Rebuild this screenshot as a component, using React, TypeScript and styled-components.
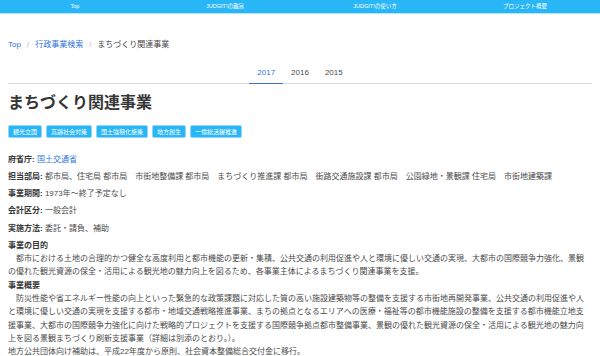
import React, { ReactElement } from 'react';
import styled, { createGlobalStyle } from 'styled-components';

const GlobalStyle = createGlobalStyle`
  body {
    margin: 0;
    background: #ffffff;
    font-family: "Liberation Sans", "Noto Sans CJK JP", sans-serif;
    color: #4a4a4a;
  }
`;

const navItems = ['Top', 'JUDGIT!の趣旨', 'JUDGIT!の使い方', 'プロジェクト概要'];
const tags = ['観光立国', '高齢社会対策', '国土強靭化施策', '地方創生', '一億総活躍推進'];
const years = ['2017', '2016', '2015'];

const bureaus = [
    '都市局、住宅局',
    '都市局　市街地整備課',
    '都市局　まちづくり推進課',
    '都市局　街路交通施設課',
    '都市局　公園緑地・景観課',
    '住宅局　市街地建築課',
];

export default function App(): ReactElement {
    return (
        <>
        <GlobalStyle />
        <Nav>
            {navItems.map((item) => (
                <NavItem key={item}>{item}</NavItem>
            ))}
        </Nav>
        <Main>
            <Breadcrumb>
                <Crumb><Link>Top</Link></Crumb>
                <Separator>/</Separator>
                <Crumb><Link>行政事業検索</Link></Crumb>
                <Separator>/</Separator>
                <Crumb>まちづくり関連事業</Crumb>
            </Breadcrumb>

            <Tabs>
                {years.map((year, i) => (
                    <Tab key={year} active={i === 0}>{year}</Tab>
                ))}
            </Tabs>

            <Title>まちづくり関連事業</Title>

            <TagList>
                {tags.map((tag) => (
                    <Tag key={tag}>{tag}</Tag>
                ))}
            </TagList>

            <Details>
                <Row><Label>府省庁:</Label> <Link>国土交通省</Link></Row>
                <Row><Label>担当部局:</Label> {bureaus.join(' ')}</Row>
                <Row><Label>事業期間:</Label> 1973年〜終了予定なし</Row>
                <Row><Label>会計区分:</Label> 一般会計</Row>
                <Row><Label>実施方法:</Label> 委託・請負、補助</Row>
            </Details>

            <Section>
                <SectionTitle>事業の目的</SectionTitle>
                <Paragraph>
                    {'\u3000'}都市における土地の合理的かつ健全な高度利用と都市機能の更新・集積、公共交通の利用促進や人と環境に優しい交通の実現、大都市の国際競争力強化、景観の優れた観光資源の保全・活用による観光地の魅力向上を図るため、各事業主体によるまちづくり関連事業を支援。
                </Paragraph>
                <SectionTitle>事業概要</SectionTitle>
                <Paragraph>
                    {'\u3000'}防災性能や省エネルギー性能の向上といった緊急的な政策課題に対応した質の高い施設建築物等の整備を支援する市街地再開発事業、公共交通の利用促進や人と環境に優しい交通の実現を支援する都市・地域交通戦略推進事業、まちの拠点となるエリアへの医療・福祉等の都市機能施設の整備を支援する都市機能立地支援事業、大都市の国際競争力強化に向けた戦略的プロジェクトを支援する国際競争拠点都市整備事業、景観の優れた観光資源の保全・活用による観光地の魅力向上を図る景観まちづくり刷新支援事業（詳細は別添のとおり。）。
                    <br />
                    地方公共団体向け補助は、平成22年度から原則、社会資本整備総合交付金に移行。
                </Paragraph>
            </Section>
        </Main>
        </>
    )
}

const Nav = styled.nav`
    display: grid;
    grid-template-columns: repeat(4, 1fr);
    height: 13px;
    background: #29b6f6;
    border-bottom: 1px solid #b3e5fc;
`

const NavItem = styled.div`
    text-align: center;
    font-size: 5.5px;
    line-height: 13px;
    color: #ffffff;
`

const Main = styled.main`
    padding: 0 8px;
`

const Breadcrumb = styled.div`
    display: flex;
    align-items: center;
    margin-top: 25px;
    font-size: 8px;
    line-height: 12px;
    color: #4a4a4a;
`

const Crumb = styled.span`
    white-space: nowrap;
`

const Separator = styled.span`
    padding: 0 6px;
    color: #b5b5b5;
`

const Link = styled.a`
    color: #3273dc;
    cursor: pointer;
`

const Tabs = styled.div`
    display: flex;
    justify-content: center;
    margin-top: 12px;
    border-bottom: 1px solid #dbdbdb;
`

const Tab = styled.div<{ active?: boolean }>`
    padding: 4px 8px;
    margin-bottom: -1px;
    font-size: 8px;
    line-height: 12px;
    color: ${(props) => props.active ? '#3273dc' : '#4a4a4a'};
    border-bottom: 1px solid ${(props) => props.active ? '#3273dc' : 'transparent'};
`

const Title = styled.h1`
    margin: 9px 0 0;
    font-size: 16px;
    line-height: 20px;
    font-weight: 600;
    color: #363636;
`

const TagList = styled.div`
    display: flex;
    gap: 4px;
    margin-top: 12px;
`

const Tag = styled.span`
    display: inline-flex;
    align-items: center;
    height: 11px;
    padding: 0 4px;
    font-size: 6px;
    color: #ffffff;
    background: #29b6f6;
    border: 0.5px solid #8fd6f9;
    border-radius: 2px;
`

const Details = styled.div`
    margin-top: 14.5px;
`

const Row = styled.p`
    margin: 0 0 4.25px;
    font-size: 8px;
    line-height: 13px;
`

const Label = styled.strong`
    font-weight: 700;
    color: #363636;
`

const Section = styled.div`
    margin-top: 1px;
    max-width: 580px;
`

const SectionTitle = styled.h3`
    margin: 0;
    font-size: 8px;
    line-height: 13.3px;
    font-weight: 700;
    color: #363636;
`

const Paragraph = styled.p`
    margin: 0;
    font-size: 8px;
    line-height: 13.3px;
`
